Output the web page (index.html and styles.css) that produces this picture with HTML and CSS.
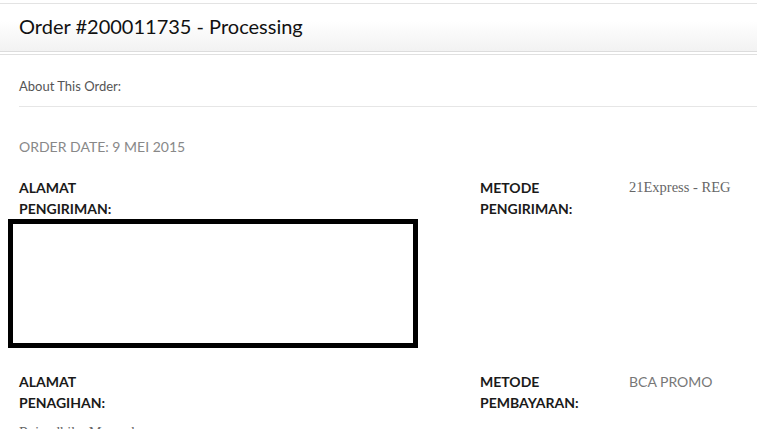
FILE: index.html
```html
<!DOCTYPE html>
<html lang="id">
<head>
    <meta charset="UTF-8">
    <meta name="viewport" content="width=device-width, initial-scale=1.0">
    <title>Order #200011735</title>
    <link rel="stylesheet" href="styles.css">
</head>
<body>
    <div class="page">
        <div class="head">
            <h1 class="title">Order #200011735 - Processing</h1>
        </div>
        <div class="content">
            <p class="about">About This Order:</p>
            <p class="date">Order Date: 9 Mei 2015</p>

            <div class="row">
                <div class="col">
                    <div class="label">Alamat<br>Pengiriman:</div>
                    <div class="redact"></div>
                </div>
                <div class="col side">
                    <div class="label">Metode<br>Pengiriman:</div>
                    <div class="value serif">21Express - REG</div>
                </div>
            </div>

            <div class="row second">
                <div class="col">
                    <div class="label">Alamat<br>Penagihan:</div>
                    <div class="address serif">Rajendhika Mamesh</div>
                </div>
                <div class="col side">
                    <div class="label">Metode<br>Pembayaran:</div>
                    <div class="value">BCA PROMO</div>
                </div>
            </div>
        </div>
    </div>
</body>
</html>
```

FILE: styles.css
```css
body{
    margin: 0;
    background: #fff;
    font-family: Lato, "Open Sans", sans-serif;
    color: #222;
    overflow: hidden;
}
.page{
    margin-top: 3px;
}
.head{
    border-top: 1px solid #e3e3e3;
    border-bottom: 1px solid #dcdcdc;
    height: 47px;
    background: linear-gradient(#fff 35%, #f2f2f2);
    box-shadow: 0 2px 0 0 #fff, 0 3px 0 0 #e0e0e0;
}
.title{
    margin: 0;
    padding-left: 19px;
    font-size: 20px;
    font-weight: 400;
    line-height: 45px;
    color: #111;
}
.content{
    padding-left: 19px;
}
.about{
    margin: 25px 0 0;
    padding-bottom: 11px;
    border-bottom: 1px solid #e6e6e6;
    font-size: 13px;
    line-height: 18px;
    color: #555;
}
.date{
    margin: 31px 0 0;
    font-size: 14px;
    line-height: 18px;
    color: #888;
    text-transform: uppercase;
}
.row{
    display: flex;
    margin-top: 21px;
}
.row.second{
    margin-top: 23px;
}
.col{
    width: 461px;
}
.col.side{
    width: auto;
    display: flex;
}
.label{
    font-size: 14px;
    font-weight: 700;
    line-height: 21px;
    color: #1a1a1a;
    text-transform: uppercase;
}
.side .label{
    width: 149px;
}
.value{
    font-size: 14px;
    line-height: 21px;
    color: #777;
}
.serif{
    font-family: "Liberation Serif", serif;
    font-size: 14.5px;
    color: #666;
}
.redact{
    box-sizing: border-box;
    width: 410px;
    height: 129px;
    margin-left: -11px;
    border: 5px solid #000;
    background: #fff;
}
.address{
    margin-top: 9px;
    line-height: 20px;
}
```
